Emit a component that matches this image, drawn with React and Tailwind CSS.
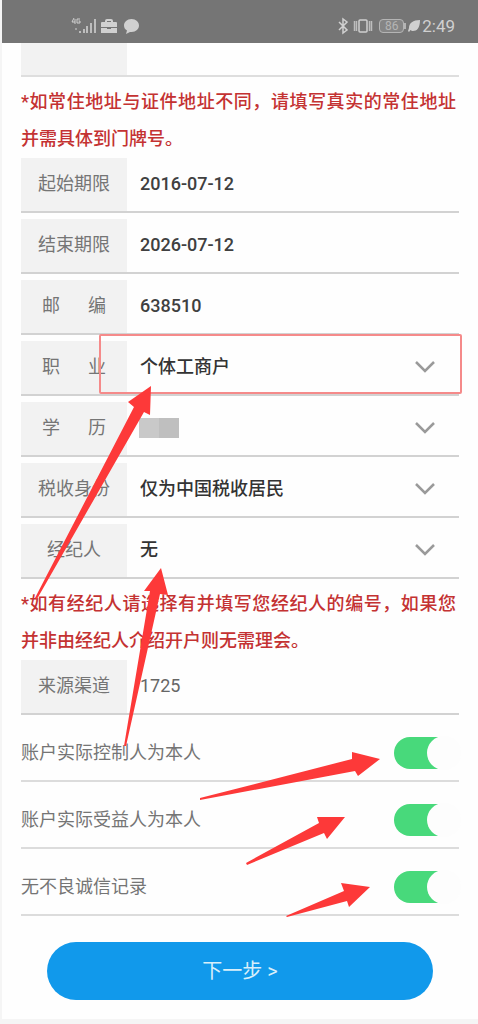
import { useState } from "react";

const StatusBar = () => (
  <header className="flex h-[43px] items-end justify-between bg-[#757575] pl-[69px] pr-[23px] pb-2 text-[#d0d0d0]">
    <div className="flex items-center gap-1">
      <svg width="26" height="18" viewBox="0 0 26 18" fill="currentColor" aria-hidden="true">
        <path d="M3 1L1 5H4M4 2V7M9 2H6V6H9V4H7.500" fill="none" stroke="currentColor" />
        <path d="M4 11h2v2H4z" opacity="0.5" />
        <path d="M8 14h2v2H8zM12 12h2v4h-2zM15 9h2v7h-2zM19 6h2v10h-2zM23 2h2v14h-2z" opacity="0.8" />
      </svg>
      <svg width="16" height="18" viewBox="0 0 16 18" fill="currentColor" aria-hidden="true">
        <path d="M4 5V4Q4 2 6 2h4q2 0 2 2v1h3q1 0 1 1v4H0V6q0-1 1-1zM6 5h4V4H6zM0 11h6v1h4v-1h6v5H0z" fillRule="evenodd" />
      </svg>
      <svg width="17" height="18" viewBox="0 0 17 18" fill="currentColor" className="ml-0.5" aria-hidden="true">
        <path d="M8.500 2C13 2 16 5 16 8.500S13 15 8.500 15H7l-4 2 1-3.500C2 12.500 1 10.500 1 8.500 1 5 4 2 8.500 2z" />
      </svg>
    </div>
    <div className="flex items-center">
      <svg width="12" height="18" viewBox="0 0 12 18" fill="none" stroke="currentColor" strokeWidth="1.500" aria-hidden="true">
        <path d="M2 5l8 8-4 3V2l4 3-8 8" />
      </svg>
      <svg width="20" height="18" viewBox="0 0 20 18" fill="none" stroke="currentColor" strokeWidth="1.500" className="ml-1" aria-hidden="true">
        <path d="M1.500 4v10M3.500 4v10M16.500 4v10M18.500 4v10" opacity="0.8" />
        <rect x="6" y="3" width="8" height="12" rx="1" />
      </svg>
      <div className="ml-1.5 flex items-center opacity-70">
        <span className="flex h-3.5 w-[25px] items-center justify-center rounded-[4px] border border-[#d0d0d0] bg-[#8c8c8c] text-xs leading-3">
          86
        </span>
        <span className="h-1.5 w-0.5 bg-[#d0d0d0]" />
      </div>
      <svg width="12" height="18" viewBox="0 0 12 18" fill="currentColor" className="ml-0.5" aria-hidden="true">
        <path d="M12 3c0 8-3 11-7 11-1 0-2-.5-2.500-1L1 15l-1-1 1-3C1 6 5 3 12 3z" />
      </svg>
      <span className="ml-0.5 text-[17px] leading-[18px]">2:49</span>
    </div>
  </header>
);

const Chevron = () => (
  <svg
    className="pointer-events-none absolute right-[23px] top-5 text-[#9a9a9a]"
    width="22"
    height="14"
    viewBox="0 0 22 14"
    fill="none"
    stroke="currentColor"
    strokeWidth="2.500"
    aria-hidden="true"
  >
    <path d="M2 1l9 9 9-9" />
  </svg>
);

const Field = ({ id, label, children }) => (
  <div className="relative flex h-[55px] border-b-2 border-[#d2d2d2]">
    <label
      htmlFor={id}
      className="flex w-[106px] shrink-0 items-center justify-center bg-[#f2f2f2] pb-0.5 text-[#757575]"
    >
      {label.length === 2 ? (
        <span className="flex w-16 justify-between">
          <span>{label[0]}</span>
          <span>{label[1]}</span>
        </span>
      ) : (
        label
      )}
    </label>
    {children}
  </div>
);

const TextField = ({ id, label, initial, className = "font-medium text-[#404040]" }) => (
  <Field id={id} label={label}>
    <input
      id={id}
      type="text"
      defaultValue={initial}
      className={`min-w-0 flex-1 bg-transparent pl-[13px] pb-0.5 outline-none ${className}`}
    />
  </Field>
);

const SelectField = ({ id, label, value, children }) => (
  <Field id={id} label={label}>
    <select
      id={id}
      className="min-w-0 flex-1 appearance-none bg-transparent pl-[13px] pb-0.5 font-medium text-[#333333] outline-none"
    >
      <option>{value}</option>
    </select>
    <Chevron />
    {children}
  </Field>
);

const Toggle = ({ id, label }) => {
  const [on, setOn] = useState(true);

  return (
    <div className="flex h-[67px] items-center justify-between border-b-2 border-[#dcdcdc] pt-2.5 text-[#757575]">
      <label htmlFor={id}>{label}</label>
      <input
        id={id}
        type="checkbox"
        role="switch"
        checked={on}
        onChange={(e) => setOn(e.target.checked)}
        className="relative mr-[21px] h-8 w-11 appearance-none rounded-l-full bg-gray-300 after:absolute after:-top-px after:left-[33px] after:size-[34px] after:rounded-full after:bg-[#fdfdfd] checked:bg-[#48d97b]"
      />
    </div>
  );
};

const Note = ({ children }) => (
  <p className="pt-1.5 pb-px pr-[3px] text-justify font-medium leading-[37px] text-[#c43232]">{children}</p>
);

const Arrows = () => (
  <svg
    className="pointer-events-none absolute left-0 top-0"
    width="478"
    height="1024"
    viewBox="0 0 478 1024"
    fill="#fd3939"
    aria-hidden="true"
  >
    <path d="M151 386L128 402L134 407L35 598L37 599L144 412L150 415Z" />
    <path d="M161 568L144 591L150 591L124 746L126 746L160 594L168 595Z" />
    <path d="M380 759L352 752L352 759L200 798L200 800L355 771L358 776Z" />
    <path d="M345 817L317 817L319 823L246 863L247 865L324 833L327 839Z" />
    <path d="M370 887L341 883L344 891L286 916L287 917L347 901L349 907Z" />
  </svg>
);

const App = () => {
  return (
    <div
      lang="zh-CN"
      className="relative min-h-screen border-l-2 border-b-[5px] border-[#f5f5f5] bg-[#fefefe] font-['Roboto','Noto_Sans_CJK_SC',sans-serif] text-lg"
    >
      <StatusBar />

      <form className="pb-[19px] pl-[19px] pr-[19px]" onSubmit={(e) => e.preventDefault()}>
        <div className="h-[34px] border-b-2 border-[#dedede]">
          <div className="h-full w-[106px] bg-[#f2f2f2]" />
        </div>

        <Note>*如常住地址与证件地址不同，请填写真实的常住地址并需具体到门牌号。</Note>

        <div className="flex flex-col gap-1.5">
          <TextField id="start" label="起始期限" initial="2016-07-12" />
          <TextField id="end" label="结束期限" initial="2026-07-12" />
          <TextField id="zip" label="邮编" initial="638510" />
          <SelectField id="job" label="职业" value="个体工商户">
            <span className="pointer-events-none absolute -top-[7px] -right-[3px] bottom-0 left-[78px] rounded-xs border-2 border-[#f58a8a]" />
          </SelectField>
          <SelectField id="education" label="学历" value="">
            <span className="pointer-events-none absolute left-[118px] top-4 flex h-5 w-10">
              <span className="flex-1 bg-[#c9c9c9]" />
              <span className="flex-1 bg-[#bfbfbf]" />
            </span>
          </SelectField>
          <SelectField id="tax" label="税收身份" value="仅为中国税收居民" />
          <SelectField id="broker" label="经纪人" value="无" />
        </div>

        <Note>*如有经纪人请选择有并填写您经纪人的编号，如果您并非由经纪人介绍开户则无需理会。</Note>

        <TextField id="channel" label="来源渠道" initial="1725" className="text-[#666666]" />

        <Toggle id="controller" label="账户实际控制人为本人" />
        <Toggle id="beneficiary" label="账户实际受益人为本人" />
        <Toggle id="credit" label="无不良诚信记录" />

        <div className="px-[26px] pt-[26px]">
          <button type="submit" className="h-[58px] w-full rounded-full bg-[#1199eb] text-xl text-[#d9effa]">
            下一步 &gt;
          </button>
        </div>
      </form>

      <div className="absolute top-0 -left-0.5">
        <Arrows />
      </div>
    </div>
  );
};

export default App;
